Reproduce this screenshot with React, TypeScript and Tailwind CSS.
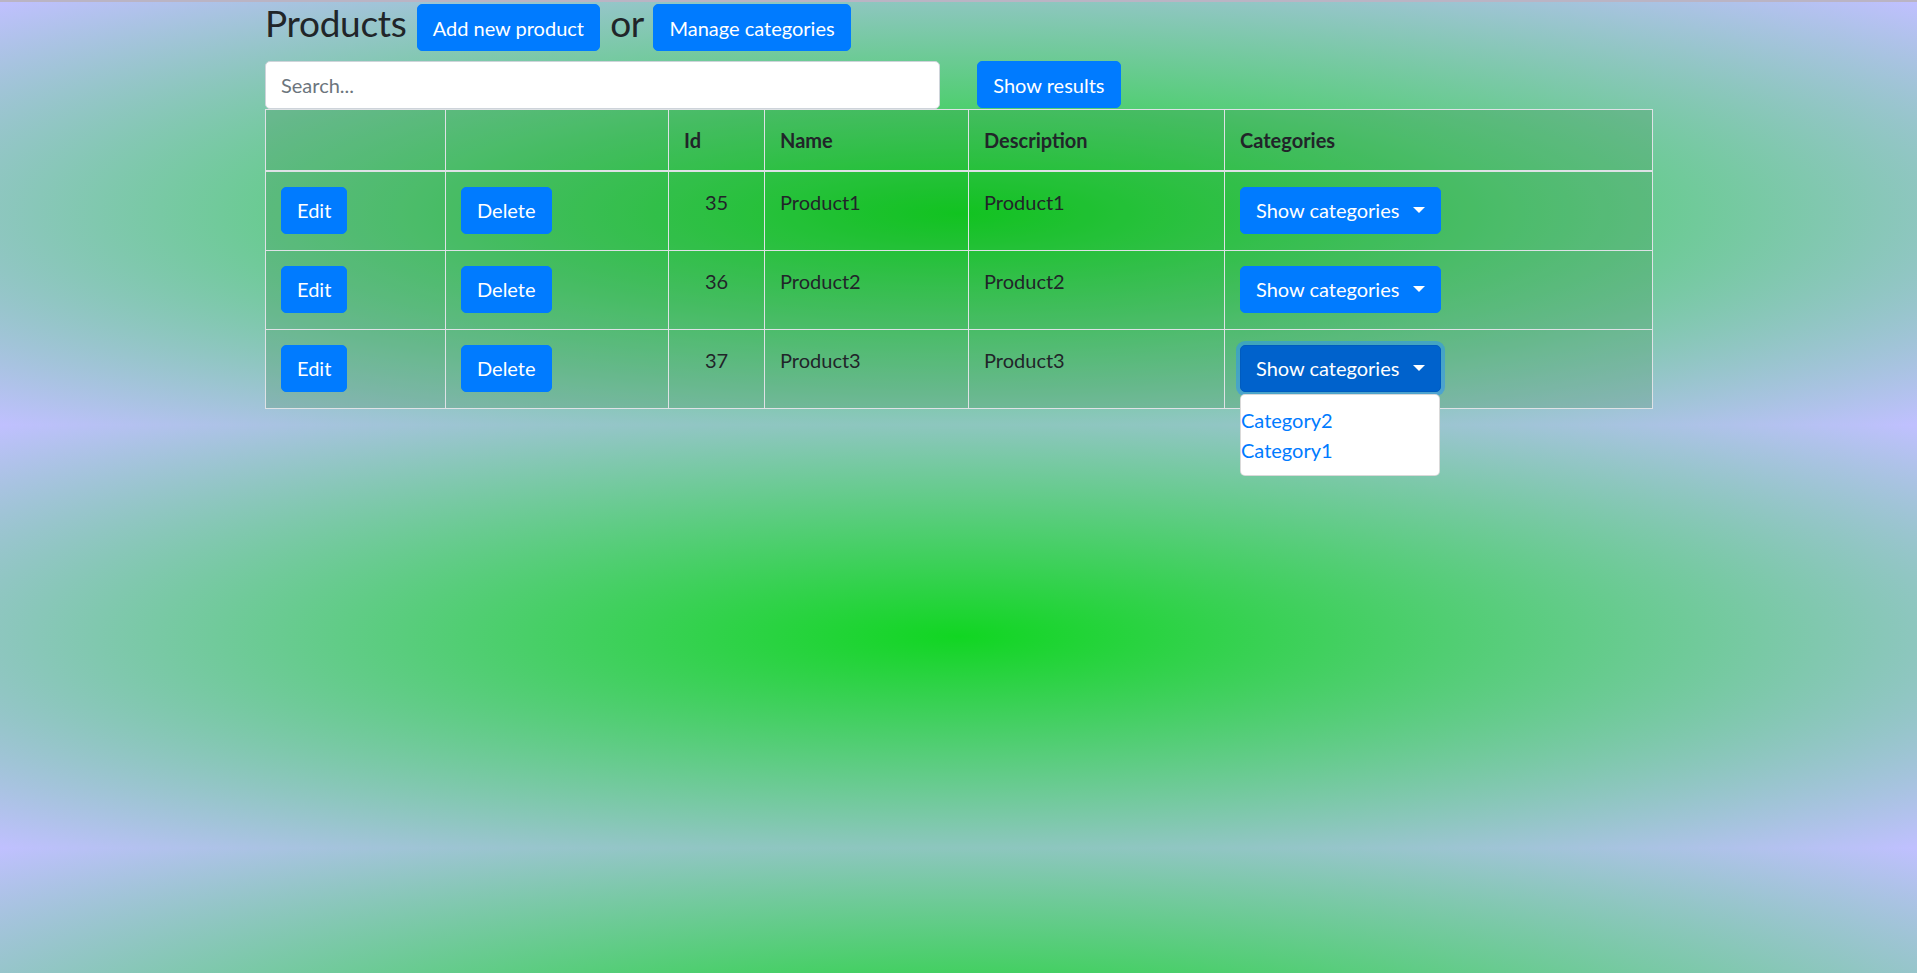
import React from "react";

const PRODUCTS = [
  { id: 35, name: "Product1", description: "Product1" },
  { id: 36, name: "Product2", description: "Product2" },
  { id: 37, name: "Product3", description: "Product3" },
];

const CATEGORIES = ["Category2", "Category1"];

const btn =
  "inline-block rounded-[5px] border border-[#007bff] bg-[#007bff] px-[15px] py-[7.5px] align-middle text-[20px] font-normal leading-[30px] tracking-normal text-white [word-spacing:0]";

function Caret() {
  return (
    <span className="ml-[14px] inline-block h-0 w-0 border-x-[6px] border-t-[6px] border-b-0 border-x-transparent border-t-white align-[5px]" />
  );
}

export default function App() {
  return (
    <div
      className="min-h-screen border-t-2 border-[#bab4c4] bg-[radial-gradient(#11d622,#c0c0ff)] bg-[length:100%_423px] text-[20px] leading-[1.5] text-[#212529]"
      style={{ fontFamily: "Lato, 'Liberation Sans', sans-serif" }}
    >
      <div className="mx-auto w-[1387px]">
        {/* Title with actions */}
        <h2 className="-mt-[3px] mb-[10px] text-[37px] font-normal leading-[48px] tracking-[-0.3px] [word-spacing:1px]">
          Products <button className={btn}>Add new product</button> or{" "}
          <button className={btn}>Manage categories</button>
        </h2>

        {/* Search */}
        <div className="grid grid-cols-2 gap-x-[37.5px]">
          <input
            type="text"
            placeholder="Search..."
            className="h-[47.5px] w-full rounded-[5px] border border-[#ced4da] bg-white px-[15px] py-[7.5px] text-[20px] leading-[30px] text-[#495057] placeholder:text-[#6c757d]"
          />
          <div>
            <button className={btn}>Show results</button>
          </div>
        </div>

        {/* Products table */}
        <table className="mb-4 w-full table-fixed border-collapse bg-[rgba(20,110,30,0.18)]">
          <thead>
            <tr>
              <th className="w-[180px] border border-b-2 border-[#dee2e6] p-[15px] text-left align-bottom font-bold" />
              <th className="w-[223px] border border-b-2 border-[#dee2e6] p-[15px] text-left align-bottom font-bold" />
              <th className="w-[96px] border border-b-2 border-[#dee2e6] p-[15px] text-left align-bottom font-bold">Id</th>
              <th className="w-[204px] border border-b-2 border-[#dee2e6] p-[15px] text-left align-bottom font-bold">Name</th>
              <th className="w-[256px] border border-b-2 border-[#dee2e6] p-[15px] text-left align-bottom font-bold">Description</th>
              <th className="w-[428px] border border-b-2 border-[#dee2e6] p-[15px] text-left align-bottom font-bold">Categories</th>
            </tr>
          </thead>
          <tbody>
            {PRODUCTS.map((p, i) => {
              const open = i === PRODUCTS.length - 1;
              return (
                <tr key={p.id}>
                  <td className="border border-[#dee2e6] px-[15px] pt-[15px] pb-[16px] align-top">
                    <button className={btn}>Edit</button>
                  </td>
                  <td className="border border-[#dee2e6] px-[15px] pt-[15px] pb-[16px] align-top">
                    <button className={btn}>Delete</button>
                  </td>
                  <td className="border border-[#dee2e6] px-[15px] pt-[15px] pb-[16px] text-center align-top">{p.id}</td>
                  <td className="border border-[#dee2e6] px-[15px] pt-[15px] pb-[16px] align-top">{p.name}</td>
                  <td className="border border-[#dee2e6] px-[15px] pt-[15px] pb-[16px] align-top">{p.description}</td>
                  <td className="border border-[#dee2e6] px-[15px] pt-[15px] pb-[16px] align-top">
                    <div className="relative inline-block">
                      {open ? (
                        <button className="inline-block rounded-[5px] border border-[#005cbf] bg-[#0062cc] px-[15px] py-[7.5px] align-middle text-[20px] leading-[30px] text-white shadow-[0_0_0_4px_rgba(38,143,255,0.5)]">
                          Show categories
                          <Caret />
                        </button>
                      ) : (
                        <button className={btn}>
                          Show categories
                          <Caret />
                        </button>
                      )}
                      {open && (
                        <div className="absolute left-0 top-full z-10 mt-[2.5px] w-[200px] rounded-[5px] border border-black/15 bg-white py-[10px] text-left">
                          {CATEGORIES.map((c) => (
                            <a key={c} href="#" className="block text-[#007bff]">
                              {c}
                            </a>
                          ))}
                        </div>
                      )}
                    </div>
                  </td>
                </tr>
              );
            })}
          </tbody>
        </table>
      </div>
    </div>
  );
}
